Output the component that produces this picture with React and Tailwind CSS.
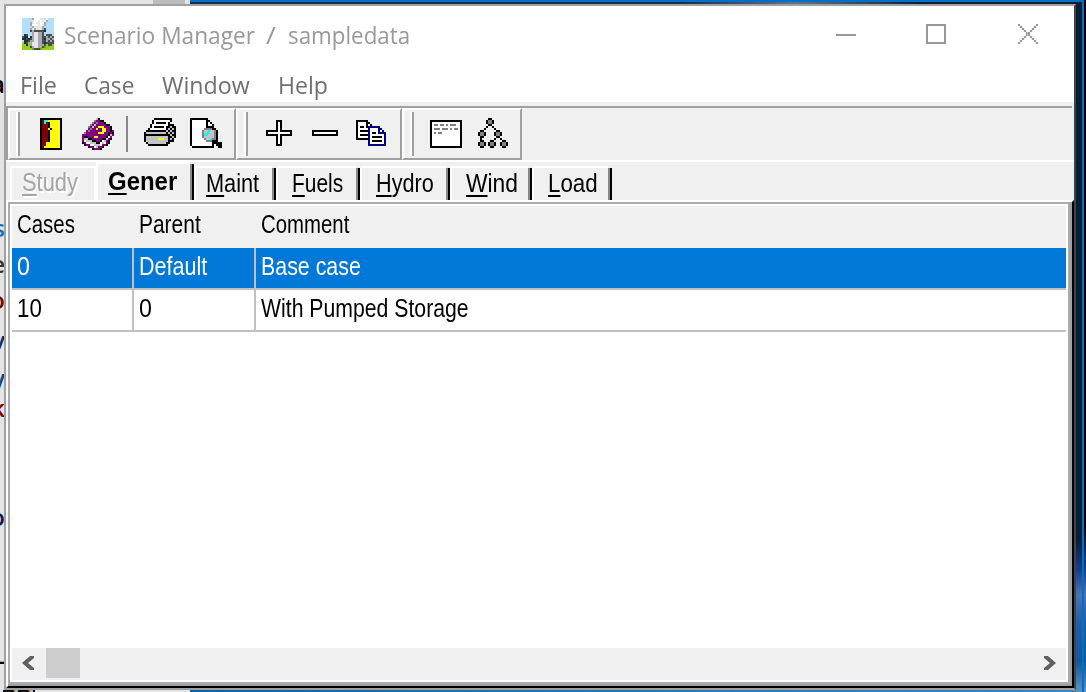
import React, { useLayoutEffect, useRef } from 'react';

const COLORS = {
  K: '#000000', W: '#ffffff', G: '#c3c3c3', D: '#808080', Y: '#ffff00', R: '#800000',
  C: '#00ffff', P: '#800080', N: '#000080', B: '#b4dffa', S: '#e4e6e8', M: '#a8a8ac',
  T: '#4a4e52', L: '#94d016', H: '#6fa61b', A: '#22303a',
};

function PixelIcon({ rows }) {
  const w = Math.max(...rows.map((r) => r.length));
  const h = rows.length;
  return (
    <svg width={w * 2} height={h * 2} viewBox={`0 0 ${w} ${h}`} shapeRendering="crispEdges" className="block shrink-0">
      {rows.flatMap((row, y) =>
        [...row].map((c, x) => (c === '.' ? null : <rect key={`${x}-${y}`} x={x} y={y} width="1" height="1" fill={COLORS[c]} />)),
      )}
    </svg>
  );
}

const APP = [
  'BBBBBMWWWSSBWBBB', 'BBBBBSWWSWSWMBBB', 'BBBBMSWSSWWMBBBB', 'BBBBMWWWSWSMBBBB', 'BBBBBMSSSSMBBBBB',
  'BBBBMSMSSSMTBBBB', 'BBBBTMTTTTTABBBB', 'BBBBBMSSMMTBBBBB', 'BATBBMSSMMTBTTTB', 'TAABAMSSMMTTMTMT',
  'AATATMSSMMTAMMTM', 'BAATMMSSMMTTMTMT', 'LATLMSSSMMTATTTT', 'LLALMSSSMMMTLTTL', 'LLLLTMSSMMTHLLLL', 'LLLLLHTTTHLLLLLL',
];
const DOOR = [
  'KKKKKKKKKKK', 'KRCCYYYYYYK', 'KRCRKYYYYYK', 'KRRRKYYYYYK', 'KRRRKYYYYYK', 'KRRRYKYYYYK', 'KRRRKYYYYYK', 'KRRRKYYYYYK',
  'KRRRKYYYYYK', 'KRRRKYYYYYK', 'KRRRKYYYYYK', 'KRRRKYYYYYK', 'KRRYYYYYYYK', 'KRRYYYYYYYK', 'KRYYYYYYYYK', 'KKKKKKKKKKK',
];
const BOOK = [
  '.......GK.......', '......DPPKK.....', '.....DPDPPPK....', '....DPGPPPPPKK..', '...DPGPPYYYPPPK.', '...PDPPYPPYYPPK.',
  '..PDPPPPPPYYPPKP', '.DPPPPPPYYYPPKPK', 'PPPPPPPPPPPPPKGP', 'PKKPPPYYPPPPKWP.', 'PGGKKPPPPPKKGPK.', 'PWGGGKKPPKWGPK..',
  'KPWWGGGKKWGWPK..', '.KPPWWGGGWPPK...', '...KPPWGPPK.....', '.....KPPPK......',
];
const PRINTER = [
  '.....KKKKKKKKK..', '....KWWWWWWWWK..', '....KWKKKKKWK...', '...KWWWWWWWWKKK.', '...KWKKKKKWKKGKK', '..KWWWWWWWWKGKGK',
  '.KKKKKKKKKKGKGKK', 'KGGGGGGGGGGKGKGK', 'KKKKKKKKKKKKKGKK', 'KGGGGGGGGGGGKKGK', 'KGGGGGGYYYGGKGK.', 'KGGGGGGGGGGGKKK.',
  '.KGGGGGGGGGKK...', '..KKKKKKKKKK....',
];
const PREVIEW = [
  'KKKKKKKKK.......', 'KWWWWWWWKK......', 'KWWWWWWWKWK.....', 'KWWWWWWWKWWK....', 'KWWWWWWWKKKK....', 'KWWWWWWDDDDKK...',
  'KWWWWWDGGCGGDK..', 'KWWWWWDGCCGGDK..', 'KWWWWWDCCGGGDK..', 'KWWWWWDGGGGGDK..', 'KWWWWWWDGGCDDK..', 'KWWWWWWWDDDKKK..',
  'KWWWWWWWWWWKKKKK', 'KWWWWWWWWWWK.KKK', '.KKKKKKKKKKK..KK',
];
const PLUS = [
  '.....KKK.....', '.....KWK.....', '.....KWK.....', '.....KWK.....', '.....KWK.....', 'KKKKKKWKKKKKK', 'KWWWWWWWWWWWK',
  'KKKKKKWKKKKKK', '.....KWK.....', '.....KWK.....', '.....KWK.....', '.....KWK.....', '.....KKK.....',
];
const MINUS = ['KKKKKKKKKKKKK', 'KWWWWWWWWWWWK', 'KKKKKKKKKKKKK'];
const COPY = [
  'KKKKKK.........', 'KWWWWKK........', 'KWWWWKWK.......', 'KWKKWKNNNNNN...', 'KWWWWWNWWWWNN..', 'KWKKKKNWWWWNWN.', 'KWWWWWNWKKWNNNN',
  'KWKKKKNWWWWWWWN', 'KWWWWWNWKKKKKWN', 'KKKKKKNWWWWWWWN', '......NWKKKKKWN', '......NWWWWWWWN', '......NNNNNNNNN',
];
const FORM = [
  'KKKKKKKKKKKKKKKK', 'KWWWWWWWWWWWWWWK', 'KWDDWDDWDWDDDWWK', 'KWWWWWWWWWWWWWWK', 'KWDDDWDDDWDWDDWK', 'KWWWWWWWWWWWWWWK', 'KWDWDDWWWWWWWWWK',
  'KWWWWWWWWWWWWWWK', 'KWWWWWWWWWWWWWWK', 'KWWWWWWWWWWWWWWK', 'KWWWWWWWWWWWWWWK', 'KWWWWWWWWWWWWWWK', 'KWWWWWWWWWWWWWWK', 'KKKKKKKKKKKKKKKK',
];
const TREE = [
  '.....KK........', '....KDDK.......', '....KDDK.......', '.....KK........', '....K..K.......', '...K....K......', '.KK......KK....', 'KDDK....KDDK...',
  'KDDK....KDDK...', '.KK......KK....', '.K......K..K...', '.KK...KK....KK.', 'KDDK.KDDK..KDDK', 'KDDK.KDDK..KDDK', '.KK...KK....KK.',
];
const CLOSE = [
  'X........X', '.X......X.', '..X....X..', '...X..X...', '....XX....', '....XX....', '...X..X...', '..X....X..', '.X......X.', 'X........X',
];

/* Text condensed or widened horizontally to a fixed advance width. */
function Fit({ w, className = '', children }) {
  const ref = useRef(null);
  useLayoutEffect(() => {
    const el = ref.current;
    el.style.transform = `scaleX(${w / el.offsetWidth})`;
  }, [w]);
  return (
    <span className="block shrink-0 whitespace-nowrap" style={{ width: w }}>
      <span ref={ref} className={`inline-block origin-left whitespace-pre ${className}`}>{children}</span>
    </span>
  );
}

const Underlined = ({ text }) => (
  <>
    <span className="underline decoration-2 underline-offset-[3px] [text-decoration-skip-ink:none]">{text[0]}</span>
    {text.slice(1)}
  </>
);

const TABS = [
  { text: 'Maint', tw: 53, width: 'w-[82px]' },
  { text: 'Fuels', tw: 51, width: 'w-[84px]' },
  { text: 'Hydro', tw: 58, width: 'w-[90px]' },
  { text: 'Wind', tw: 52, width: 'w-[82px]' },
  { text: 'Load', tw: 50, width: 'w-[80px]' },
];
const PADS = ['pl-[10px]', 'pl-[14px]', 'pl-[14px]', 'pl-[14px]', 'pl-[14px]'];

const MENU = [
  ['File', 37, 'ml-[14px]'], ['Case', 50, 'ml-[27px]'], ['Window', 88, 'ml-[28px]'], ['Help', 50, 'ml-[28px]'],
];

const FRAGMENTS = [
  ['a', 'top-[68px] text-black'], ['s', 'top-[212px] text-[#1670b8]'], ['e', 'top-[248px] text-[#30343a]'],
  ['o', 'top-[284px] text-[#700808]'], ['v', 'top-[324px] text-[#102b70]'], ['y', 'top-[362px] text-[#10408a]'],
  ['k', 'top-[392px] text-[#800000]'], ['o', 'top-[501px] text-[#071a60]'], ['-', 'top-[644px] text-black'],
];

function Grip() {
  return <div className="h-[44px] w-1 shrink-0 border-r-2 border-[#a0a0a0] bg-white" />;
}

function Row({ cells, className, line }) {
  return (
    <div className={`flex ${className}`}>
      <div className={`w-[122px] shrink-0 border-r-2 pl-[5px] ${line}`}>{cells[0]}</div>
      <div className={`w-[122px] shrink-0 border-r-2 pl-[5px] ${line}`}>{cells[1]}</div>
      <div className="pl-[5px]">{cells[2]}</div>
    </div>
  );
}

export default function App() {
  return (
    <div className="relative h-[692px] w-[1086px] overflow-hidden bg-[#0b1d33] font-['Liberation_Sans',sans-serif]">
      <div className="absolute inset-y-0 left-0 w-[190px] bg-[#e4e4e4]">
        <div className="absolute top-0 left-[153px] h-1 w-[32px] bg-[#bdbdbd]" />
        {FRAGMENTS.map(([t, c]) => (
          <span key={c} className={`absolute right-[185px] font-['Open_Sans',sans-serif] text-[24px] leading-8 font-semibold ${c}`}>{t}</span>
        ))}
        <div className="absolute bottom-0 left-[3px] h-[2px] w-[32px] bg-[repeating-linear-gradient(90deg,#111_0px,#111_10px,#c9a87d_12px,#8cc3e0_15px)]" />
      </div>
      <div className="absolute top-0 left-[190px] h-[2px] w-[894px] bg-[#0070ca]" />
      <div className="absolute top-[2px] left-[190px] h-[2px] w-[892px] bg-[linear-gradient(90deg,#1a2c48_0%,#1a2c48_55%,#637383_68%,#0b1d33_82%)]" />
      <div className="absolute bottom-0 left-[190px] h-[2px] w-[896px] bg-[linear-gradient(90deg,#1461a0,#2876b0_50%,#3e86b8)]" />
      <div className="absolute top-[540px] right-0 h-[152px] w-[10px] bg-[linear-gradient(#0b1d33,#173e8a_20%,#4f73ab_36%,#215ca4_55%,#15569b_80%,#5b96bd)]" />
      <div className="absolute inset-y-0 right-[2px] w-[2px] bg-[#0070ca]" />
      <div className="absolute top-0 right-0 h-[560px] w-[2px] bg-[linear-gradient(#000_94%,#13408a)]" />

      <div className="relative mt-1 ml-1 flex h-[686px] w-[1072px] flex-col border-2 border-[#a0a0a0] border-r-[#3a4550] bg-[#f0f0f0]">
        <div className="flex h-[96px] shrink-0 flex-col bg-white font-['Open_Sans',sans-serif] text-[24px] leading-[34px]">
          <div className="flex h-[62px] pl-4">
            <div className="pt-3"><PixelIcon rows={APP} /></div>
            <div className="flex pt-[12px] pl-[10px] text-[#999]">
              <Fit w={191}>Scenario Manager</Fit>
              <span className="w-[11px]" />
              <Fit w={10}>/</Fit>
              <span className="w-[12px]" />
              <Fit w={122}>sampledata</Fit>
            </div>
            <div className="ml-auto flex pt-[18px] pr-[36px]">
              <div className="mt-[10px] mr-[70px] h-[2px] w-[20px] bg-[#999]" />
              <div className="mr-[72px] size-[20px] border-2 border-[#999]" />
              <svg width="20" height="20" viewBox="0 0 10 10" shapeRendering="crispEdges">
                {CLOSE.flatMap((r, y) => [...r].map((c, x) => c === 'X' && (
                  <g key={`${x}-${y}`}>
                    <rect x={x - 0.5} y={y} width="2" height="1" fill="#ddd" opacity=".5" />
                    <rect x={x} y={y} width="1" height="1" fill="#999" />
                  </g>
                )))}
              </svg>
            </div>
          </div>
          <div className="flex text-[#6f6f6f]">
            {MENU.map(([t, w, m]) => <div key={t} className={m}><Fit w={w}>{t}</Fit></div>)}
          </div>
        </div>

        <div className="mt-1 flex h-[54px] w-[1066px] shrink-0 items-start border-t-2 border-l-2 border-[#a0a0a0]">
          <div className="flex h-[52px] w-[228px] border-2 border-[#a0a0a0] border-t-white border-l-white pl-[6px]">
            <div className="pt-[2px]"><Grip /></div>
            <div className="ml-[20px] pt-2"><PixelIcon rows={DOOR} /></div>
            <div className="ml-[20px] pt-2"><PixelIcon rows={BOOK} /></div>
            <div className="mt-[6px] ml-3 h-[36px] w-[2px] bg-[#888]" />
            <div className="ml-4 pt-2"><PixelIcon rows={PRINTER} /></div>
            <div className="ml-[14px] pt-2"><PixelIcon rows={PREVIEW} /></div>
          </div>
          <div className="flex h-[52px] w-[166px] border-2 border-[#a0a0a0] border-t-white border-l-white pl-[6px]">
            <div className="pt-[2px]"><Grip /></div>
            <div className="ml-[18px] pt-[10px]"><PixelIcon rows={PLUS} /></div>
            <div className="ml-[20px] pt-[20px]"><PixelIcon rows={MINUS} /></div>
            <div className="ml-[18px] pt-[10px]"><PixelIcon rows={COPY} /></div>
          </div>
          <div className="flex h-[52px] w-[120px] border-2 border-[#a0a0a0] border-t-white border-l-white pl-[6px]">
            <div className="pt-[2px]"><Grip /></div>
            <div className="ml-[16px] pt-[10px]"><PixelIcon rows={FORM} /></div>
            <div className="ml-[16px] pt-2"><PixelIcon rows={TREE} /></div>
          </div>
        </div>
        <div className="h-[2px] shrink-0 bg-white" />

        <div className="flex h-[38px] shrink-0 items-end pl-1 text-[25px] leading-[28px] text-black">
          <div className="h-[34px] w-[86px] rounded-tl-[3px] border-t-2 border-r-2 border-l-2 border-white pl-[10px] text-[#a5a5a5] [text-shadow:2px_2px_0_#fff]">
            <Fit w={56}><Underlined text="Study" /></Fit>
          </div>
          <div className="flex h-[38px] w-[98px]">
            <div className="w-[94px] border-t-2 border-l-2 border-white pt-[3px] pl-[10px] font-bold"><Fit w={69}><Underlined text="Gener" /></Fit></div>
            <div className="mt-[2px] w-1 border-r-2 border-black bg-[#888]" />
          </div>
          {TABS.map((t, i) => (
            <div key={t.text} className={`flex h-[34px] ${t.width}`}>
              <div className={`grow rounded-tl-[3px] border-t-2 border-l-2 border-white pt-[1px] ${PADS[i]}`}><Fit w={t.tw}><Underlined text={t.text} /></Fit></div>
              <div className="mt-[2px] w-1 shrink-0 border-r-2 border-black bg-[#888]" />
            </div>
          ))}
        </div>

        <div className="min-h-0 grow border-2 border-white border-r-black border-b-black">
          <div className="h-full border-r-2 border-b-2 border-[#a0a0a0]">
            <div className="flex h-full flex-col border-2 border-[#aaabb0] bg-white p-[2px] text-[25px] leading-[36px] text-black">
              <Row className="h-[42px] shrink-0 bg-[#f0f0f0]" line="border-transparent" cells={[<Fit w={58}>Cases</Fit>, <Fit w={62}>Parent</Fit>, <Fit w={88}>Comment</Fit>]} />
              <Row className="h-[42px] shrink-0 border-b-2 border-[#c0c0c0] bg-[#0078d7] text-white" line="border-[#c0c0c0]" cells={[<Fit w={13}>0</Fit>, <Fit w={68}>Default</Fit>, <Fit w={100}>Base case</Fit>]} />
              <Row className="h-[42px] shrink-0 border-b-2 border-[#c0c0c0]" line="border-[#c0c0c0]" cells={[<Fit w={25}>10</Fit>, <Fit w={13}>0</Fit>, <Fit w={208}>With Pumped Storage</Fit>]} />
              <div className="mt-auto flex h-8 shrink-0 items-start bg-[#f0f0f0]">
                <div className="flex w-[34px] pt-2 pl-[10px]">
                  <svg width="12" height="14" viewBox="0 0 12 14"><path d="M12 0H8L0 7L8 14H12V12L6 7L12 2Z" fill="#606060" /></svg>
                </div>
                <div className="h-[30px] w-[34px] bg-[#cdcdcd]" />
                <div className="ml-auto pt-2 pr-[10px]">
                  <svg width="12" height="14" viewBox="0 0 12 14"><path d="M0 0H4L12 7L4 14H0V12L6 7L0 2Z" fill="#606060" /></svg>
                </div>
              </div>
            </div>
          </div>
        </div>
      </div>
    </div>
  );
}
